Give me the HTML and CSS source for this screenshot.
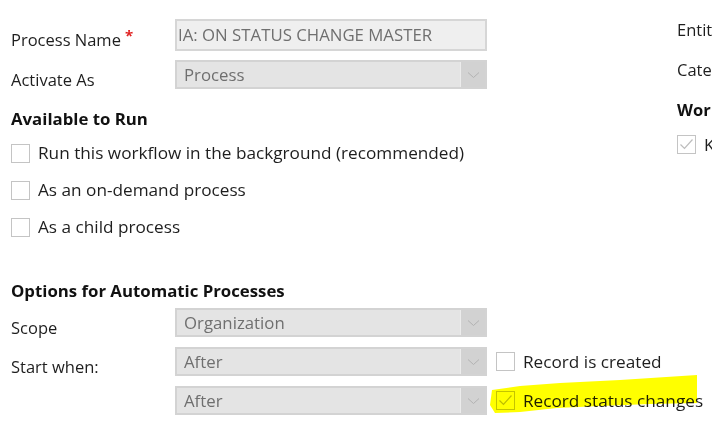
FILE: index.html
```html
<!DOCTYPE html>
<html lang="en">
<head>
<meta charset="utf-8">
<title>Process properties</title>
<link rel="stylesheet" href="styles.css">
</head>
<body>
<div class="page">
  <section class="left">
    <div class="row row-name">
      <label class="lbl">Process Name<span class="req">*</span></label>
      <div class="textbox">IA: ON STATUS CHANGE MASTER</div>
    </div>
    <div class="row row-gap9">
      <label class="lbl">Activate As</label>
      <div class="select"><span class="val">Process</span><span class="arrow"><svg width="13" height="8" viewBox="0 0 13 8"><path d="M1 1.5 L6.5 6.5 L12 1.5" fill="none" stroke="#b3b3b3" stroke-width="1"/></svg></span></div>
    </div>

    <h3 class="heading h-avail">Available to Run</h3>
    <div class="checks">
      <div class="check-row"><span class="box"></span><span class="ctext">Run this workflow in the background (recommended)</span></div>
      <div class="check-row"><span class="box"></span><span class="ctext">As an on-demand process</span></div>
      <div class="check-row"><span class="box"></span><span class="ctext">As a child process</span></div>
    </div>

    <h3 class="heading h-options">Options for Automatic Processes</h3>
    <div class="row row-scope">
      <label class="lbl">Scope</label>
      <div class="select"><span class="val">Organization</span><span class="arrow"><svg width="13" height="8" viewBox="0 0 13 8"><path d="M1 1.5 L6.5 6.5 L12 1.5" fill="none" stroke="#b3b3b3" stroke-width="1"/></svg></span></div>
    </div>
    <div class="row row-gap10">
      <label class="lbl">Start when:</label>
      <div class="select"><span class="val">After</span><span class="arrow"><svg width="13" height="8" viewBox="0 0 13 8"><path d="M1 1.5 L6.5 6.5 L12 1.5" fill="none" stroke="#b3b3b3" stroke-width="1"/></svg></span></div>
      <div class="opt"><span class="box"></span><span class="ctext">Record is created</span></div>
    </div>
    <div class="row row-gap10 row-hl">
      <label class="lbl"></label>
      <div class="select"><span class="val">After</span><span class="arrow"><svg width="13" height="8" viewBox="0 0 13 8"><path d="M1 1.5 L6.5 6.5 L12 1.5" fill="none" stroke="#b3b3b3" stroke-width="1"/></svg></span></div>
      <div class="opt"><span class="box box-checked"><svg width="17" height="17" viewBox="0 0 17 17"><path d="M2.5 8.5 L6.5 12.5 L14.5 3.5" fill="none" stroke="#bdbdbd" stroke-width="1.2"/></svg></span><span class="ctext">Record status changes</span></div>
      <svg class="highlight" width="208" height="39" viewBox="0 0 208 39"><polygon points="2,15 30,11 70,8 130,5 207,0 207,28 160,29 110,31 67,33 30,37 5,38 0,30" fill="#ffff00"/></svg>
    </div>
  </section>

  <section class="right">
    <div class="rlbl">Entity</div>
    <div class="rlbl">Category</div>
    <div class="rlbl rhead">Workflow Log Retention</div>
    <div class="check-row rcheck"><span class="box box-checked"><svg width="17" height="17" viewBox="0 0 17 17"><path d="M2.5 8.5 L6.5 12.5 L14.5 3.5" fill="none" stroke="#bdbdbd" stroke-width="1.2"/></svg></span><span class="ctext">Keep logs for workflow jobs that encountered errors</span></div>
  </section>
</div>
</body>
</html>
```

FILE: styles.css
```css
html, body {
  margin: 0;
  padding: 0;
}

body {
  width: 712px;
  height: 427px;
  overflow: hidden;
  background: #ffffff;
  color: #1e1e1e;
  font-family: "Open Sans", "Noto Sans", sans-serif;
  font-size: 16.5px;
  line-height: 20px;
}

.page {
  display: flex;
  padding-left: 11px;
}

.left {
  flex: none;
  width: 666px;
  padding-top: 19px;
}

.row {
  display: flex;
  align-items: flex-start;
  position: relative;
}

.row-gap9 {
  margin-top: 9px;
}

.row-gap10 {
  margin-top: 10px;
}

.row-scope {
  margin-top: 7px;
}

.lbl {
  flex: none;
  width: 164px;
  height: 29px;
  box-sizing: border-box;
  padding-top: 10px;
  line-height: 20px;
  white-space: nowrap;
}

.row-name .lbl {
  height: 32px;
  padding-top: 11px;
}

.req {
  color: #e02020;
  margin-left: 4px;
  font-size: 15px;
  font-weight: 700;
  position: relative;
  top: -5px;
}

.textbox {
  flex: none;
  width: 312px;
  height: 32px;
  box-sizing: border-box;
  border: 2px solid #d6d6d6;
  background: #efefef;
  color: #6f6f6f;
  padding-left: 1px;
  font-size: 16.8px;
  line-height: 28px;
  white-space: nowrap;
}

.select {
  flex: none;
  display: flex;
  width: 312px;
  height: 29px;
  box-sizing: border-box;
  border: 2px solid #d3d3d3;
  background: #e4e4e4;
}

.select .val {
  flex: 1;
  padding-left: 7px;
  font-size: 16.8px;
  line-height: 25px;
  color: #6f6f6f;
}

.select .arrow {
  flex: none;
  width: 25px;
  box-sizing: border-box;
  border-left: 1px solid #ececec;
  background: #d2d2d2;
  display: flex;
  align-items: center;
  justify-content: center;
}

.heading {
  margin: 0;
  font-size: 16.8px;
  font-weight: 700;
  line-height: 20px;
  color: #111;
}

.h-avail {
  margin-top: 20px;
}

.h-options {
  margin-top: 44px;
}

.checks {
  margin-top: 14px;
  display: flex;
  flex-direction: column;
  gap: 17px;
}

.check-row {
  display: flex;
  align-items: center;
  gap: 8px;
  height: 20px;
  white-space: nowrap;
}

.ctext {
  font-size: 17.2px;
}

.box {
  flex: none;
  width: 19px;
  height: 19px;
  box-sizing: border-box;
  border: 1px solid #c4c4c4;
  background: #ffffff;
  display: flex;
  align-items: center;
  justify-content: center;
}

.opt {
  display: flex;
  align-items: center;
  gap: 8px;
  height: 29px;
  margin-left: 9px;
  white-space: nowrap;
}

.highlight {
  position: absolute;
  left: 479px;
  top: -11px;
  mix-blend-mode: multiply;
  pointer-events: none;
}

.right {
  flex: none;
  padding-top: 20px;
  white-space: nowrap;
}

.rlbl {
  line-height: 20px;
  margin-bottom: 20px;
}

.rhead {
  font-weight: 700;
  color: #111;
  margin-bottom: 15px;
}

.rcheck {
  height: 19px;
}
```
